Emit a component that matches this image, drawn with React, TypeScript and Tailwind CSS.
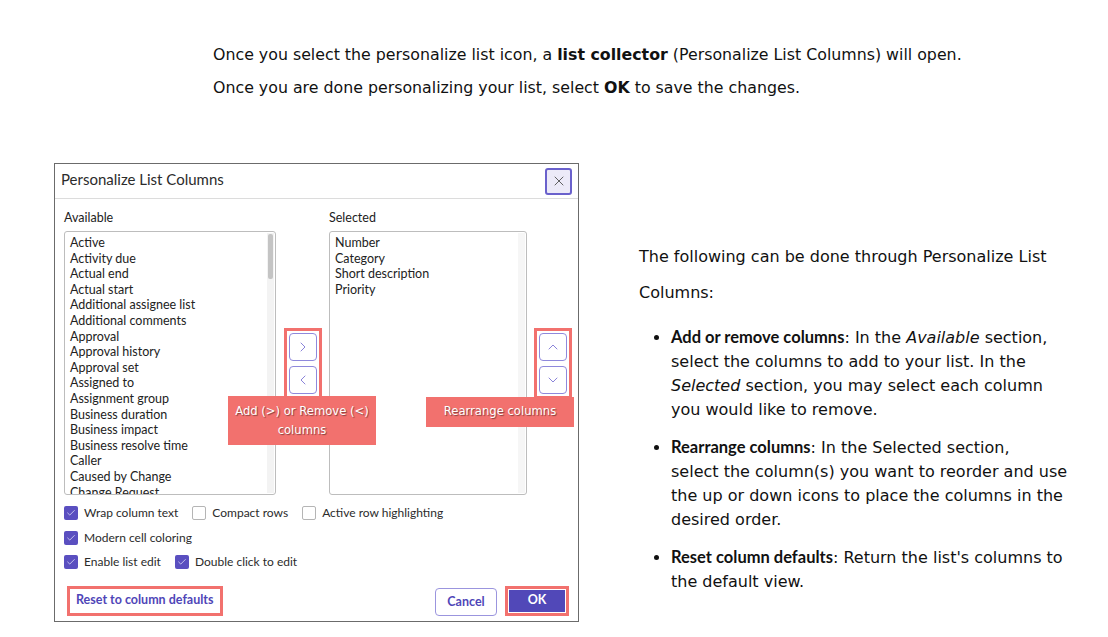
import { Check, ChevronLeft, ChevronRight, ChevronUp, ChevronDown, X } from "lucide-react";

const available = [
  "Active",
  "Activity due",
  "Actual end",
  "Actual start",
  "Additional assignee list",
  "Additional comments",
  "Approval",
  "Approval history",
  "Approval set",
  "Assigned to",
  "Assignment group",
  "Business duration",
  "Business impact",
  "Business resolve time",
  "Caller",
  "Caused by Change",
  "Change Request",
];

const selected = ["Number", "Category", "Short description", "Priority"];

function Box({ checked, label }: { checked: boolean; label: string }) {
  return (
    <label className="flex items-center gap-[6px] h-[18px]">
      {checked ? (
        <span className="w-[14px] h-[14px] rounded-[2px] bg-[#5a4fc0] flex items-center justify-center">
          <Check size={10} strokeWidth={2} className="text-[#d9d6f5]" />
        </span>
      ) : (
        <span className="w-[14px] h-[14px] rounded-[2px] border border-[#b5b5b5] bg-white" />
      )}
      <span>{label}</span>
    </label>
  );
}

function Arrow({ children }: { children: React.ReactNode }) {
  return (
    <button className="w-[28px] h-[28px] rounded-[4px] border border-[#8f89dc] bg-white flex items-center justify-center text-[#6c63cf]">
      {children}
    </button>
  );
}

function Dialog() {
  return (
    <div className="relative w-[525px] h-[459px] border border-[#6b6b6b] bg-white flex flex-col text-[#222] font-['Lato',sans-serif]">
      <div className="h-[35px] shrink-0 flex items-center justify-between pl-[6px] pr-[6px] border-b border-[#dcdcdc]">
        <span className="text-[15px] text-[#2b2b2b] -mt-[3px]">Personalize List Columns</span>
        <button className="w-[27px] h-[27px] rounded-[3px] border-2 border-[#6a61cc] bg-[#eceaf8] flex items-center justify-center text-[#555]">
          <X size={16} strokeWidth={1.4} />
        </button>
      </div>

      <div className="flex pl-[9px] pt-[12px] text-[12.5px]">
        <div className="w-[212px]">
          <div className="h-[20px] leading-[14px]">Available</div>
          <div className="relative h-[264px] border border-[#bdbdbd] rounded-[3px] overflow-hidden pl-[5px] pt-[3px] leading-[15.6px]">
            {available.map((a) => (
              <div key={a}>{a}</div>
            ))}
            <div className="absolute right-[1px] top-[1px] bottom-[1px] w-[7px] bg-[#f3f3f3]">
              <div className="mt-[1px] mx-auto w-[5px] h-[45px] rounded-[2px] bg-[#c4c4c4]" />
            </div>
          </div>
        </div>

        <div className="w-[53px] flex items-center justify-center pt-[20px]">
          <div className="border-[3px] border-[#f2716e] p-[2px] flex flex-col gap-[5px]">
            <Arrow>
              <ChevronRight size={16} strokeWidth={1.2} />
            </Arrow>
            <Arrow>
              <ChevronLeft size={16} strokeWidth={1.2} />
            </Arrow>
          </div>
        </div>

        <div className="w-[198px]">
          <div className="h-[20px] leading-[14px]">Selected</div>
          <div className="h-[264px] border border-[#bdbdbd] rounded-[3px] pl-[5px] pt-[3px] leading-[15.6px] relative">
            {selected.map((a) => (
              <div key={a}>{a}</div>
            ))}
            <div className="absolute right-[1px] top-[1px] bottom-[1px] w-[7px] bg-[#f6f6f6]" />
          </div>
        </div>

        <div className="w-[51px] flex items-center justify-center pt-[20px]">
          <div className="border-[3px] border-[#f2716e] p-[2px] flex flex-col gap-[5px]">
            <Arrow>
              <ChevronUp size={16} strokeWidth={1.2} />
            </Arrow>
            <Arrow>
              <ChevronDown size={16} strokeWidth={1.2} />
            </Arrow>
          </div>
        </div>
      </div>

      <div className="pl-[9px] pt-[9px] flex flex-col gap-[6.5px] text-[12px] text-[#2b2b2b]">
        <div className="flex gap-[14px]">
          <Box checked label="Wrap column text" />
          <Box checked={false} label="Compact rows" />
          <Box checked={false} label="Active row highlighting" />
        </div>
        <Box checked label="Modern cell coloring" />
        <div className="flex gap-[14px]">
          <Box checked label="Enable list edit" />
          <Box checked label="Double click to edit" />
        </div>
      </div>

      <div className="flex items-center justify-between pl-[12px] pr-[9px] pt-[14px] text-[12.5px] font-bold">
        <div className="border-[3px] border-[#f2716e] h-[30px] px-[6px] flex items-center text-[#4f46b8]">
          Reset to column defaults
        </div>
        <div className="flex items-center gap-[8px]">
          <button className="w-[62px] h-[28px] rounded-[4px] border border-[#9b95de] text-[#4f46b8] bg-white mt-[3px]">
            Cancel
          </button>
          <div className="border-[3px] border-[#f2716e] p-[1px]">
            <button className="w-[56px] h-[22px] bg-[#5148b8] text-white">OK</button>
          </div>
        </div>
      </div>

      <div className="absolute left-[173px] top-[232px] w-[148px] h-[49px] bg-[#f2716e] text-white text-[11.6px] leading-[19px] text-center flex items-center justify-center font-['DejaVu_Sans',sans-serif] [text-shadow:1px_1px_1px_rgba(0,0,0,0.45)]">
        Add (&gt;) or Remove (&lt;)
        <br />
        columns
      </div>
      <div className="absolute left-[371px] top-[233px] w-[148px] h-[30px] bg-[#f2716e] text-white text-[11.6px] flex items-center justify-center font-['DejaVu_Sans',sans-serif] [text-shadow:1px_1px_1px_rgba(0,0,0,0.45)]">
        Rearrange columns
      </div>
    </div>
  );
}

export default function App() {
  return (
    <div className="w-[1108px] h-[637px] bg-white text-[#111] font-['DejaVu_Sans',sans-serif] overflow-hidden">
      <div className="pl-[213px] pt-[38px] text-[15.8px] leading-[33px]">
        <p>
          Once you select the personalize list icon, a <b>list collector</b> (Personalize List Columns) will open.
        </p>
        <p>
          Once you are done personalizing your list, select <b>OK</b> to save the changes.
        </p>
      </div>

      <div className="flex pl-[54px] pt-[59px]">
        <Dialog />
        <div className="ml-[60px] mt-[76px] w-[460px] text-[16px] whitespace-nowrap">
          <p className="leading-[36px]">
            The following can be done through Personalize List
            <br />
            Columns:
          </p>
          <ul className="mt-[15px] pl-[32px] list-disc leading-[24px] flex flex-col gap-[14px]">
            <li>
              <b className="font-['Lato',sans-serif] font-bold text-[16.5px] leading-none">Add or remove columns</b>: In
              the <i>Available</i> section,
              <br />
              select the columns to add to your list. In the
              <br />
              <i>Selected</i> section, you may select each column
              <br />
              you would like to remove.
            </li>
            <li>
              <b className="font-['Lato',sans-serif] font-bold text-[16.5px] leading-none">Rearrange columns</b>: In the
              Selected section,
              <br />
              select the column(s) you want to reorder and use
              <br />
              the up or down icons to place the columns in the
              <br />
              desired order.
            </li>
            <li>
              <b className="font-['Lato',sans-serif] font-bold text-[16.5px] leading-none">Reset column defaults</b>:
              Return the list's columns to
              <br />
              the default view.
            </li>
          </ul>
        </div>
      </div>
    </div>
  );
}
